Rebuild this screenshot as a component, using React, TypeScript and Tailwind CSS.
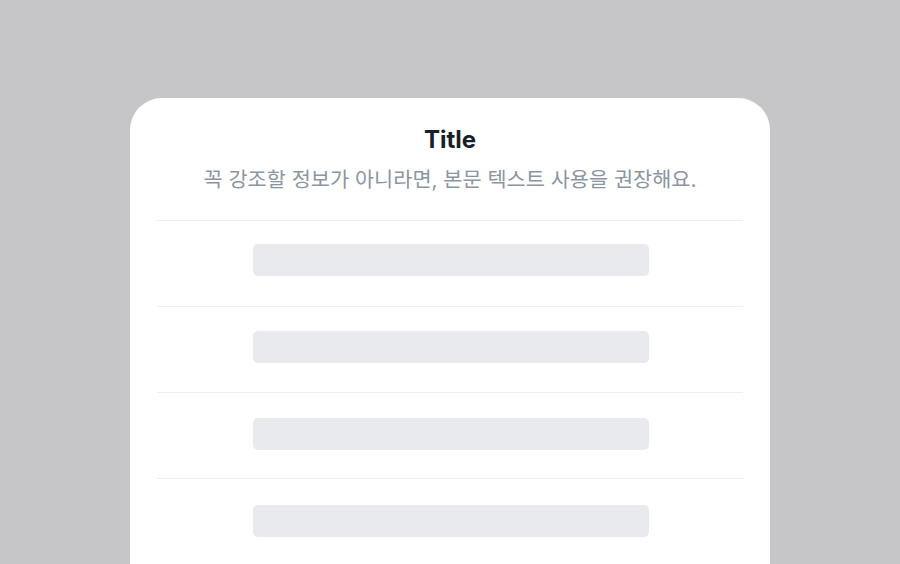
export default function App() {
  const rows = [
    "pt-[23px] pb-[30px]",
    "pt-[24px] pb-[29px]",
    "pt-[25px] pb-[28px]",
    "pt-[26px] pb-[27px]",
  ];

  return (
    <div className="h-[564px] w-full overflow-hidden bg-[#c6c6c8] pt-[98px] flex justify-center font-['Inter','Noto_Sans_CJK_KR',sans-serif]">
      <div className="w-[640px] h-[520px] bg-white rounded-t-[32px] px-[27px]">
        {/* header */}
        <div className="pt-[25px] pb-[25px] flex flex-col items-center">
          <h1 className="text-[24px] leading-[34px] font-bold text-[#191f28]">Title</h1>
          <p className="mt-[8px] text-[20.8px] leading-[30px] text-[#8b95a1]">
            꼭 강조할 정보가 아니라면, 본문 텍스트 사용을 권장해요.
          </p>
        </div>

        {/* skeleton rows */}
        {rows.map((pad, i) => (
          <div key={i} className={`border-t border-[#eeeff1] flex justify-center ${pad}`}>
            <div className="ml-[2px] w-[396px] h-[32px] rounded-[5px] bg-[#e9eaed]" />
          </div>
        ))}
      </div>
    </div>
  );
}
